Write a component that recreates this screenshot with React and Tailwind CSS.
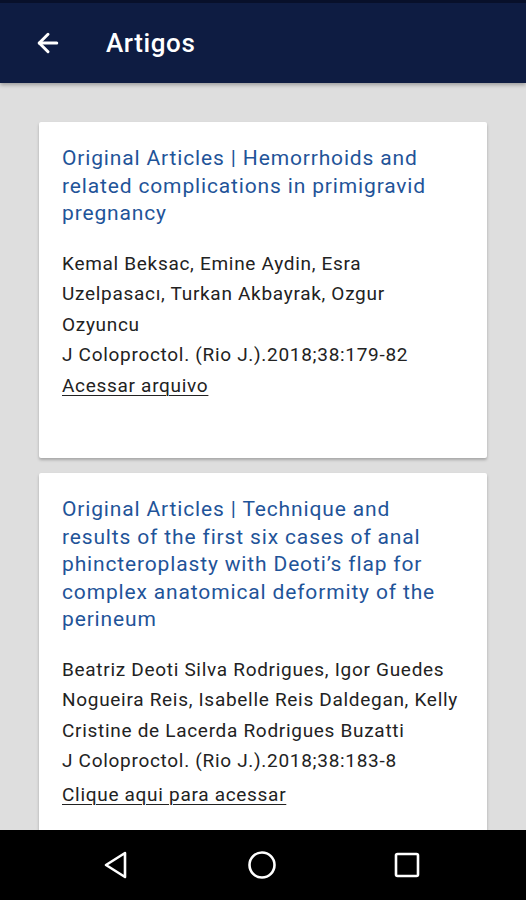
import { ArrowLeft } from "lucide-react";

const articles = [
  {
    title: "Original Articles | Hemorrhoids and related complications in primigravid pregnancy",
    authors: "Kemal Beksac, Emine Aydin, Esra Uzelpasacı, Turkan Akbayrak, Ozgur Ozyuncu",
    ref: "J Coloproctol. (Rio J.).2018;38:179-82",
    link: "Acessar arquivo",
    pb: "pb-[57px]",
    linkGap: "",
  },
  {
    title:
      "Original Articles | Technique and results of the first six cases of anal phincteroplasty with Deoti’s flap for complex anatomical deformity of the perineum",
    authors: "Beatriz Deoti Silva Rodrigues, Igor Guedes Nogueira Reis, Isabelle Reis Daldegan, Kelly Cristine de Lacerda Rodrigues Buzatti",
    ref: "J Coloproctol. (Rio J.).2018;38:183-8",
    link: "Clique aqui para acessar",
    pb: "pb-[60px]",
    linkGap: "mt-[3px]",
  },
];

function ArticleCard({ a }) {
  return (
    <div className={`shrink-0 bg-white rounded-[2px] shadow-[0_2px_3px_rgba(0,0,0,0.25)] pl-[23px] pr-[26px] pt-[23px] ${a.pb}`}>
      <h2 className="mr-[7px] text-[21px] leading-[27.5px] text-[#1f5499] tracking-[0.85px]">{a.title}</h2>
      <div className="mt-[21px] text-[19px] leading-[30.5px] text-[#222] tracking-[0.7px]">
        <p>{a.authors}</p>
        <p>{a.ref}</p>
        <a href="#" className={`inline-block underline underline-offset-[3px] decoration-1 ${a.linkGap}`}>
          {a.link}
        </a>
      </div>
    </div>
  );
}

export default function App() {
  return (
    <div className="h-[900px] w-[526px] flex flex-col bg-[#dedede] overflow-hidden" style={{ fontFamily: "Roboto, 'Noto Sans', sans-serif" }}>
      <header className="h-[83px] shrink-0 bg-[#0e1c42] border-t-[3px] border-[#08102a] flex items-center shadow-[0_2px_4px_rgba(0,0,0,0.3)] z-10">
        <ArrowLeft className="ml-[33px] text-white" size={30} strokeWidth={2.4} />
        <h1 className="ml-[43px] text-white text-[26px] font-medium tracking-[0.6px]">Artigos</h1>
      </header>
      <main className="flex-1 overflow-hidden px-[39px] pt-[39px] flex flex-col gap-[15px]">
        {articles.map((a, i) => (
          <ArticleCard key={i} a={a} />
        ))}
      </main>
      <nav className="h-[70px] shrink-0 bg-black flex items-center">
        <svg width="26" height="30" viewBox="0 0 26 30" className="ml-[103px]">
          <path d="M22 3 L3 15 L22 27 Z" fill="none" stroke="white" strokeWidth="2.6" strokeLinejoin="round" />
        </svg>
        <svg width="30" height="30" viewBox="0 0 30 30" className="ml-[118px]">
          <circle cx="15" cy="15" r="12.5" fill="none" stroke="white" strokeWidth="2.6" />
        </svg>
        <svg width="26" height="26" viewBox="0 0 26 26" className="ml-[117px]">
          <rect x="2" y="2" width="22" height="22" rx="1.5" fill="none" stroke="white" strokeWidth="2.6" />
        </svg>
      </nav>
    </div>
  );
}
